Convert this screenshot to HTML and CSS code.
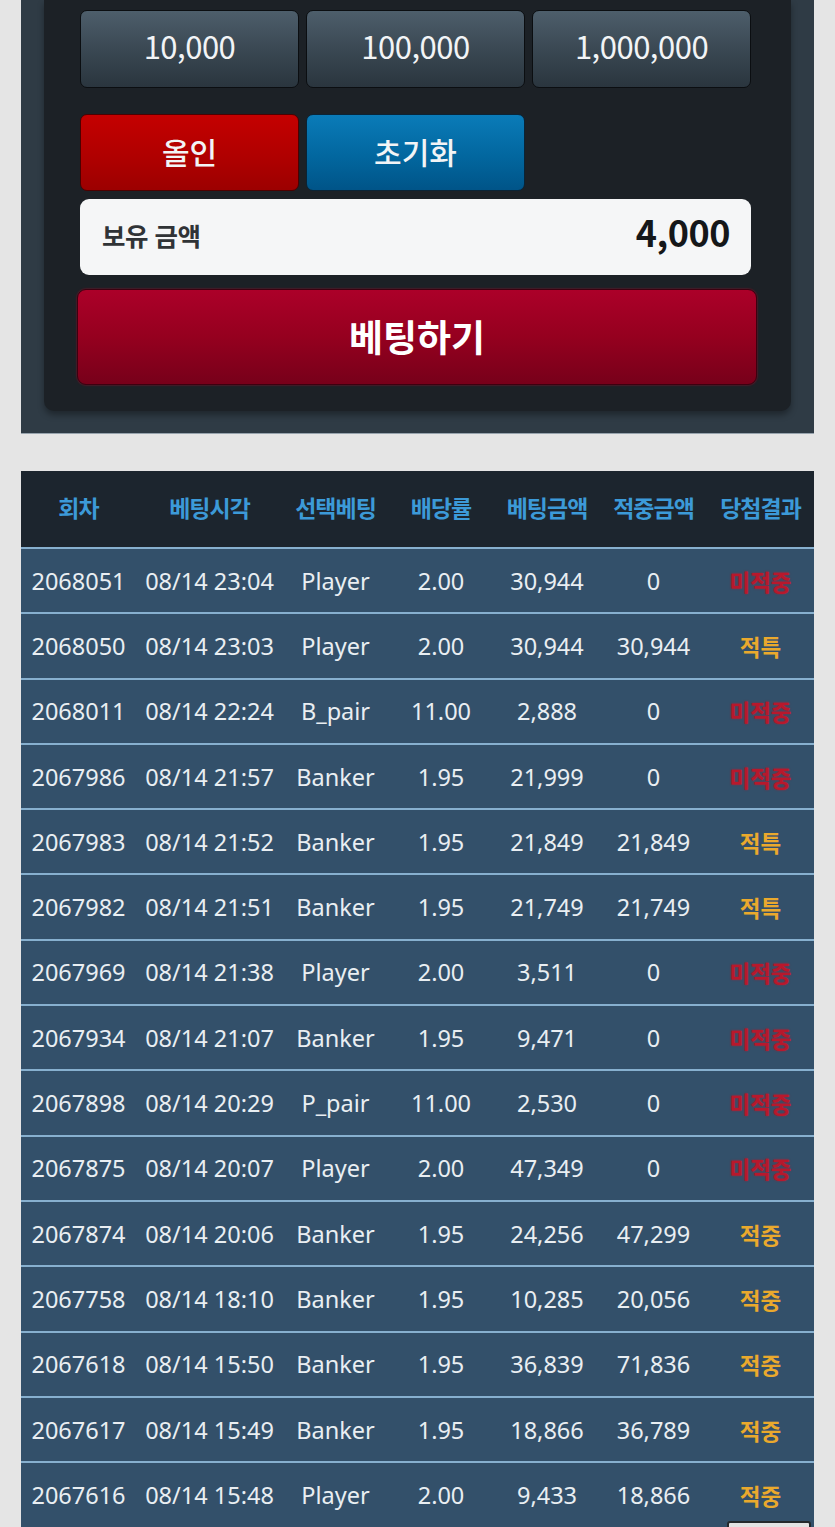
FILE: index.html
```html
<!DOCTYPE html>
<html lang="ko">
<head>
<meta charset="utf-8">
<title>베팅</title>
<link rel="stylesheet" href="styles.css">
</head>
<body>
<section class="panel">
  <div class="inner">
    <div class="chips">
      <button class="btn chip">10,000</button>
      <button class="btn chip">100,000</button>
      <button class="btn chip">1,000,000</button>
    </div>
    <div class="chips actions">
      <button class="btn allin">올인</button>
      <button class="btn reset">초기화</button>
    </div>
    <div class="balance">
      <span class="balance-label">보유 금액</span>
      <span class="balance-value">4,000</span>
    </div>
    <button class="bet">베팅하기</button>
  </div>
</section>

<table class="history">
  <colgroup>
    <col class="c1"><col class="c2"><col class="c3"><col class="c4"><col class="c5"><col class="c6"><col class="c7">
  </colgroup>
  <thead>
    <tr><th>회차</th><th>베팅시각</th><th>선택베팅</th><th>배당률</th><th>베팅금액</th><th>적중금액</th><th>당첨결과</th></tr>
  </thead>
  <tbody>
    <tr><td>2068051</td><td>08/14 23:04</td><td>Player</td><td>2.00</td><td>30,944</td><td>0</td><td class="lose">미적중</td></tr>
    <tr><td>2068050</td><td>08/14 23:03</td><td>Player</td><td>2.00</td><td>30,944</td><td>30,944</td><td class="win">적특</td></tr>
    <tr><td>2068011</td><td>08/14 22:24</td><td>B_pair</td><td>11.00</td><td>2,888</td><td>0</td><td class="lose">미적중</td></tr>
    <tr><td>2067986</td><td>08/14 21:57</td><td>Banker</td><td>1.95</td><td>21,999</td><td>0</td><td class="lose">미적중</td></tr>
    <tr><td>2067983</td><td>08/14 21:52</td><td>Banker</td><td>1.95</td><td>21,849</td><td>21,849</td><td class="win">적특</td></tr>
    <tr><td>2067982</td><td>08/14 21:51</td><td>Banker</td><td>1.95</td><td>21,749</td><td>21,749</td><td class="win">적특</td></tr>
    <tr><td>2067969</td><td>08/14 21:38</td><td>Player</td><td>2.00</td><td>3,511</td><td>0</td><td class="lose">미적중</td></tr>
    <tr><td>2067934</td><td>08/14 21:07</td><td>Banker</td><td>1.95</td><td>9,471</td><td>0</td><td class="lose">미적중</td></tr>
    <tr><td>2067898</td><td>08/14 20:29</td><td>P_pair</td><td>11.00</td><td>2,530</td><td>0</td><td class="lose">미적중</td></tr>
    <tr><td>2067875</td><td>08/14 20:07</td><td>Player</td><td>2.00</td><td>47,349</td><td>0</td><td class="lose">미적중</td></tr>
    <tr><td>2067874</td><td>08/14 20:06</td><td>Banker</td><td>1.95</td><td>24,256</td><td>47,299</td><td class="win">적중</td></tr>
    <tr><td>2067758</td><td>08/14 18:10</td><td>Banker</td><td>1.95</td><td>10,285</td><td>20,056</td><td class="win">적중</td></tr>
    <tr><td>2067618</td><td>08/14 15:50</td><td>Banker</td><td>1.95</td><td>36,839</td><td>71,836</td><td class="win">적중</td></tr>
    <tr><td>2067617</td><td>08/14 15:49</td><td>Banker</td><td>1.95</td><td>18,866</td><td>36,789</td><td class="win">적중</td></tr>
    <tr><td>2067616</td><td>08/14 15:48</td><td>Player</td><td>2.00</td><td>9,433</td><td>18,866</td><td class="win">적중</td></tr>
  </tbody>
</table>

<div class="float-top"></div>
</body>
</html>
```

FILE: styles.css
```css
* { box-sizing: border-box; }

html, body {
  margin: 0;
  padding: 0;
  background: #e5e5e5;
  font-family: "Noto Sans CJK KR", "Noto Sans", sans-serif;
  overflow: hidden;
}

.panel {
  margin: 0 21px;
  background: #2f3b45;
  padding: 0 23px 22px;
  border-bottom: 1px solid #97a3ad;
}

.inner {
  background: #1c2126;
  border-radius: 0 0 10px 10px;
  padding: 10px 40px 26px 36px;
  box-shadow: 0 4px 6px rgba(0, 0, 0, 0.35);
}

.chips {
  display: flex;
  gap: 7px;
}

.actions {
  margin-top: 26px;
}

.btn {
  width: 219px;
  height: 78px;
  border-radius: 7px;
  font-family: "Noto Sans CJK KR", sans-serif;
  color: #f2f4f6;
  cursor: pointer;
}

.chip {
  font-size: 31px;
  font-weight: 400;
  letter-spacing: -0.5px;
  padding: 0 0 7px;
  background: linear-gradient(to bottom, #4d5e6b 0%, #3a4853 50%, #2a353e 100%);
  border: 1.5px solid #0b0e11;
}

.allin,
.reset {
  height: 77px;
  font-size: 30px;
  font-weight: 500;
  padding: 0 0 4px;
}

.allin {
  background: linear-gradient(to bottom, #c40000 0%, #b00000 55%, #9c0000 100%);
  border: 1.5px solid #4d0000;
}

.reset {
  background: linear-gradient(to bottom, #0a7bb8 0%, #02679f 55%, #005488 100%);
  border: 1.5px solid #0a2436;
}

.balance {
  margin-top: 8px;
  height: 76px;
  background: #f5f6f7;
  border-radius: 9px;
  display: flex;
  align-items: center;
  justify-content: space-between;
  padding: 0 21px 0 22px;
}

.balance-label {
  font-size: 25.5px;
  font-weight: 700;
  color: #303336;
  letter-spacing: -0.5px;
  margin-bottom: 6px;
}

.balance-value {
  font-size: 36px;
  font-weight: 700;
  color: #151719;
  letter-spacing: -0.5px;
  margin-bottom: 12px;
}

.bet {
  display: block;
  margin: 14px 0 0 -3px;
  width: 680px;
  height: 96px;
  border-radius: 9px;
  border: 1px solid #3e0010;
  box-shadow: 0 0 2px #a0102a;
  background: linear-gradient(to bottom, #ac0029 0%, #95001f 50%, #77001a 100%);
  color: #ffffff;
  font-family: "Noto Sans CJK KR", sans-serif;
  font-size: 37px;
  font-weight: 700;
  padding: 0 0 3px;
}

.history {
  margin: 37px 21px 0;
  width: 793px;
  border-collapse: collapse;
  table-layout: fixed;
}

.c1 { width: 115px; }
.c2 { width: 147px; }
.c3 { width: 105px; }
.c4 { width: 106px; }
.c5 { width: 106px; }
.c6 { width: 107px; }
.c7 { width: 107px; }

.history th {
  background: #1c252e;
  color: #3c9ad8;
  height: 77px;
  font-size: 23px;
  font-weight: 700;
  padding: 0 0 4px;
  text-align: center;
  letter-spacing: -1px;
  white-space: nowrap;
}

.history td {
  background: #33506a;
  border-top: 2px solid #87b0cf;
  height: 65.3px;
  padding: 0;
  text-align: center;
  color: #e9eef2;
  font-family: "Noto Sans", "Noto Sans CJK KR", sans-serif;
  font-size: 23.5px;
  white-space: nowrap;
}

.history td.lose,
.history td.win {
  font-family: "Noto Sans CJK KR", sans-serif;
  font-size: 22.5px;
  font-weight: 700;
}

.history td.lose {
  color: #b8182c;
  text-shadow: 0 0 2px rgba(184, 24, 44, 0.9);
}

.history td.win {
  color: #eaa92d;
}

.float-top {
  position: fixed;
  left: 727px;
  top: 1521px;
  width: 84px;
  height: 40px;
  background: #e3e3e3;
  border: 2px solid #25292c;
  border-radius: 3px;
}
```
